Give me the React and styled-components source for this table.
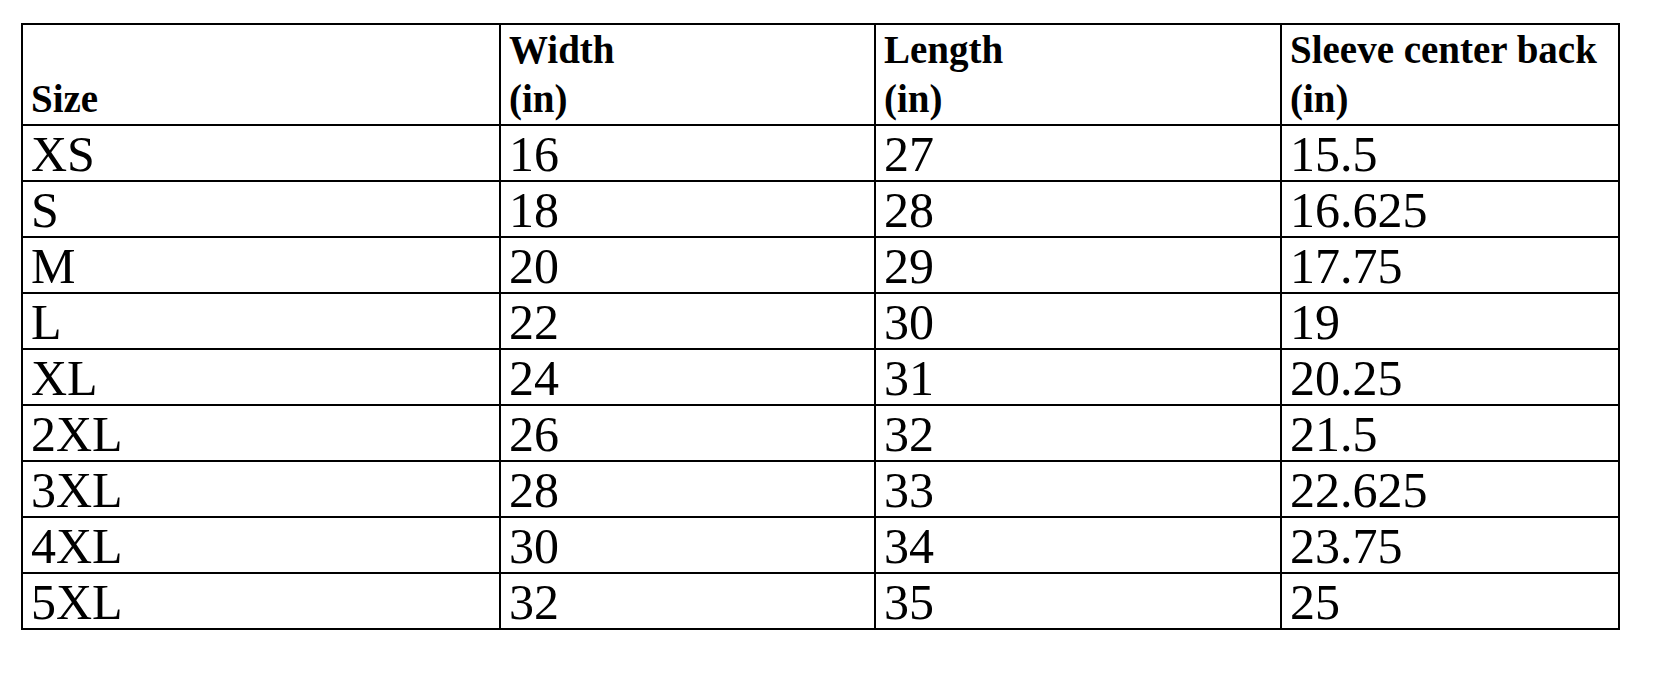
import styled, { createGlobalStyle } from "styled-components"

const GlobalStyle = createGlobalStyle`
  html, body {
    margin: 0;
    padding: 0;
    background: #fff;
  }
`

const Page = styled.div`
  padding: 23px 0 0 21px;
  font-family: "Liberation Serif", "Times New Roman", serif;
  color: #000;
`

const Table = styled.table`
  border-collapse: separate;
  border-spacing: 0;
  table-layout: fixed;
  width: 1599px;
  border-top: 2px solid #000;
  border-left: 2px solid #000;
`

const HeadCell = styled.th`
  box-sizing: border-box;
  width: ${p => p.$w}px;
  height: 101px;
  padding: 0 0 1px 8px;
  text-align: left;
  vertical-align: bottom;
  font-weight: bold;
  font-size: 39px;
  line-height: 49px;
  border-right: 2px solid #000;
  border-bottom: 2px solid #000;
  white-space: nowrap;
`

const Cell = styled.td`
  box-sizing: border-box;
  height: 56px;
  padding: 2px 0 0 8px;
  vertical-align: top;
  font-size: 50px;
  line-height: 52px;
  border-right: 2px solid #000;
  border-bottom: 2px solid #000;
  white-space: nowrap;
`

const columns = [
  { w: 478, label: ["Size"] },
  { w: 375, label: ["Width", "(in)"] },
  { w: 406, label: ["Length", "(in)"] },
  { w: 338, label: ["Sleeve center back", "(in)"] },
]

const rows = [
  ["XS", "16", "27", "15.5"],
  ["S", "18", "28", "16.625"],
  ["M", "20", "29", "17.75"],
  ["L", "22", "30", "19"],
  ["XL", "24", "31", "20.25"],
  ["2XL", "26", "32", "21.5"],
  ["3XL", "28", "33", "22.625"],
  ["4XL", "30", "34", "23.75"],
  ["5XL", "32", "35", "25"],
]

const App = () => {
  return (
    <Page>
      <GlobalStyle />
      <Table>
        <thead>
          <tr>
            {columns.map(col => (
              <HeadCell key={col.label.join(" ")} $w={col.w}>
                {col.label.map((line, i) => (
                  <span key={line}>
                    {i > 0 && <br />}
                    {line}
                  </span>
                ))}
              </HeadCell>
            ))}
          </tr>
        </thead>
        <tbody>
          {rows.map(row => (
            <tr key={row[0]}>
              {row.map((value, i) => (
                <Cell key={i}>{value}</Cell>
              ))}
            </tr>
          ))}
        </tbody>
      </Table>
    </Page>
  )
}

export default App
